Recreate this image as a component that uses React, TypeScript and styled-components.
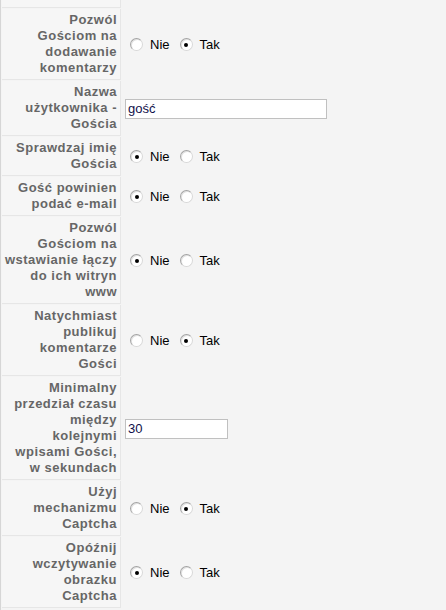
import React from "react";
import styled, { createGlobalStyle } from "styled-components";

const GlobalStyle = createGlobalStyle`
  html, body {
    margin: 0;
    padding: 0;
    background: #f4f4f4;
  }
  body {
    font-family: "Liberation Sans", Arial, sans-serif;
  }
`;

const Page = styled.div`
  min-height: 610px;
  border-left: 1px solid #d6d6d6;
  padding-left: 1px;
  box-sizing: border-box;
`;

const ParamList = styled.div`
  display: grid;
  grid-template-columns: 119px 1fr;
  row-gap: 1px;
  column-gap: 1px;
`;

const Key = styled.div<{ $stub?: boolean }>`
  box-sizing: border-box;
  background: #f6f6f6;
  border-bottom: 1px solid #e6e6e6;
  border-right: 1px solid #e6e6e6;
  padding: ${(p) => (p.$stub ? "0" : "3px 3px 3px 0")};
  height: ${(p) => (p.$stub ? "8px" : "auto")};
  text-align: right;
  white-space: nowrap;
  color: #666;
  font-weight: bold;
  font-size: 13px;
  line-height: 16px;
  letter-spacing: 0.5px;
`;

const Value = styled.div`
  display: flex;
  align-items: center;
  padding: 0 3px;
  font-size: 13px;
  color: #000;
`;

const RadioGroup = styled.div`
  display: flex;
  align-items: center;
`;

const Radio = styled.span<{ $checked: boolean }>`
  box-sizing: border-box;
  width: 13px;
  height: 13px;
  margin: 0 3px 0 5px;
  border-radius: 50%;
  border: 1px solid #a4a4a4;
  border-right-color: #d8d8d8;
  border-bottom-color: #d8d8d8;
  background: #fff;
  box-shadow: inset 1px 1px 0 #e2e2e2;
  display: inline-flex;
  align-items: center;
  justify-content: center;
  &::after {
    content: "";
    width: 4px;
    height: 4px;
    border-radius: 50%;
    background: #000;
    display: ${(p) => (p.$checked ? "block" : "none")};
  }
`;

const RadioLabel = styled.span`
  margin: 0 5px 0 4px;
  font-size: 13px;
  line-height: 16px;
`;

const TextInput = styled.input<{ $width: number }>`
  box-sizing: border-box;
  width: ${(p) => p.$width}px;
  height: 20px;
  border: 1px solid #c0c0c0;
  background: #fff;
  padding: 0 2px;
  font-family: "Liberation Sans", Arial, sans-serif;
  font-size: 13px;
  color: #10104a;
  outline: none;
`;

type Param =
  | { lines: string[]; kind: "radio"; yes: boolean }
  | { lines: string[]; kind: "text"; value: string; width: number };

const params: Param[] = [
  { lines: ["Pozwól", "Gościom na", "dodawanie", "komentarzy"], kind: "radio", yes: true },
  { lines: ["Nazwa", "użytkownika -", "Gościa"], kind: "text", value: "gość", width: 202 },
  { lines: ["Sprawdzaj imię", "Gościa"], kind: "radio", yes: false },
  { lines: ["Gość powinien", "podać e-mail"], kind: "radio", yes: false },
  {
    lines: ["Pozwól", "Gościom na", "wstawianie łączy", "do ich witryn", "www"],
    kind: "radio",
    yes: false,
  },
  { lines: ["Natychmiast", "publikuj", "komentarze", "Gości"], kind: "radio", yes: true },
  {
    lines: ["Minimalny", "przedział czasu", "między", "kolejnymi", "wpisami Gości,", "w sekundach"],
    kind: "text",
    value: "30",
    width: 103,
  },
  { lines: ["Użyj", "mechanizmu", "Captcha"], kind: "radio", yes: true },
  { lines: ["Opóźnij", "wczytywanie", "obrazku", "Captcha"], kind: "radio", yes: false },
];

const YesNo: React.FC<{ yes: boolean }> = ({ yes }) => (
  <RadioGroup>
    <Radio $checked={!yes} />
    <RadioLabel>Nie</RadioLabel>
    <Radio $checked={yes} />
    <RadioLabel>Tak</RadioLabel>
  </RadioGroup>
);

const App: React.FC = () => {
  return (
    <Page>
      <GlobalStyle />
      <ParamList>
        <Key $stub />
        <Value />
        {params.map((p, i) => (
          <React.Fragment key={i}>
            <Key>
              {p.lines.map((l, j) => (
                <React.Fragment key={j}>
                  {j > 0 && <br />}
                  {l}
                </React.Fragment>
              ))}
            </Key>
            <Value>
              {p.kind === "radio" ? (
                <YesNo yes={p.yes} />
              ) : (
                <TextInput $width={p.width} defaultValue={p.value} />
              )}
            </Value>
          </React.Fragment>
        ))}
      </ParamList>
    </Page>
  );
};

export default App;
